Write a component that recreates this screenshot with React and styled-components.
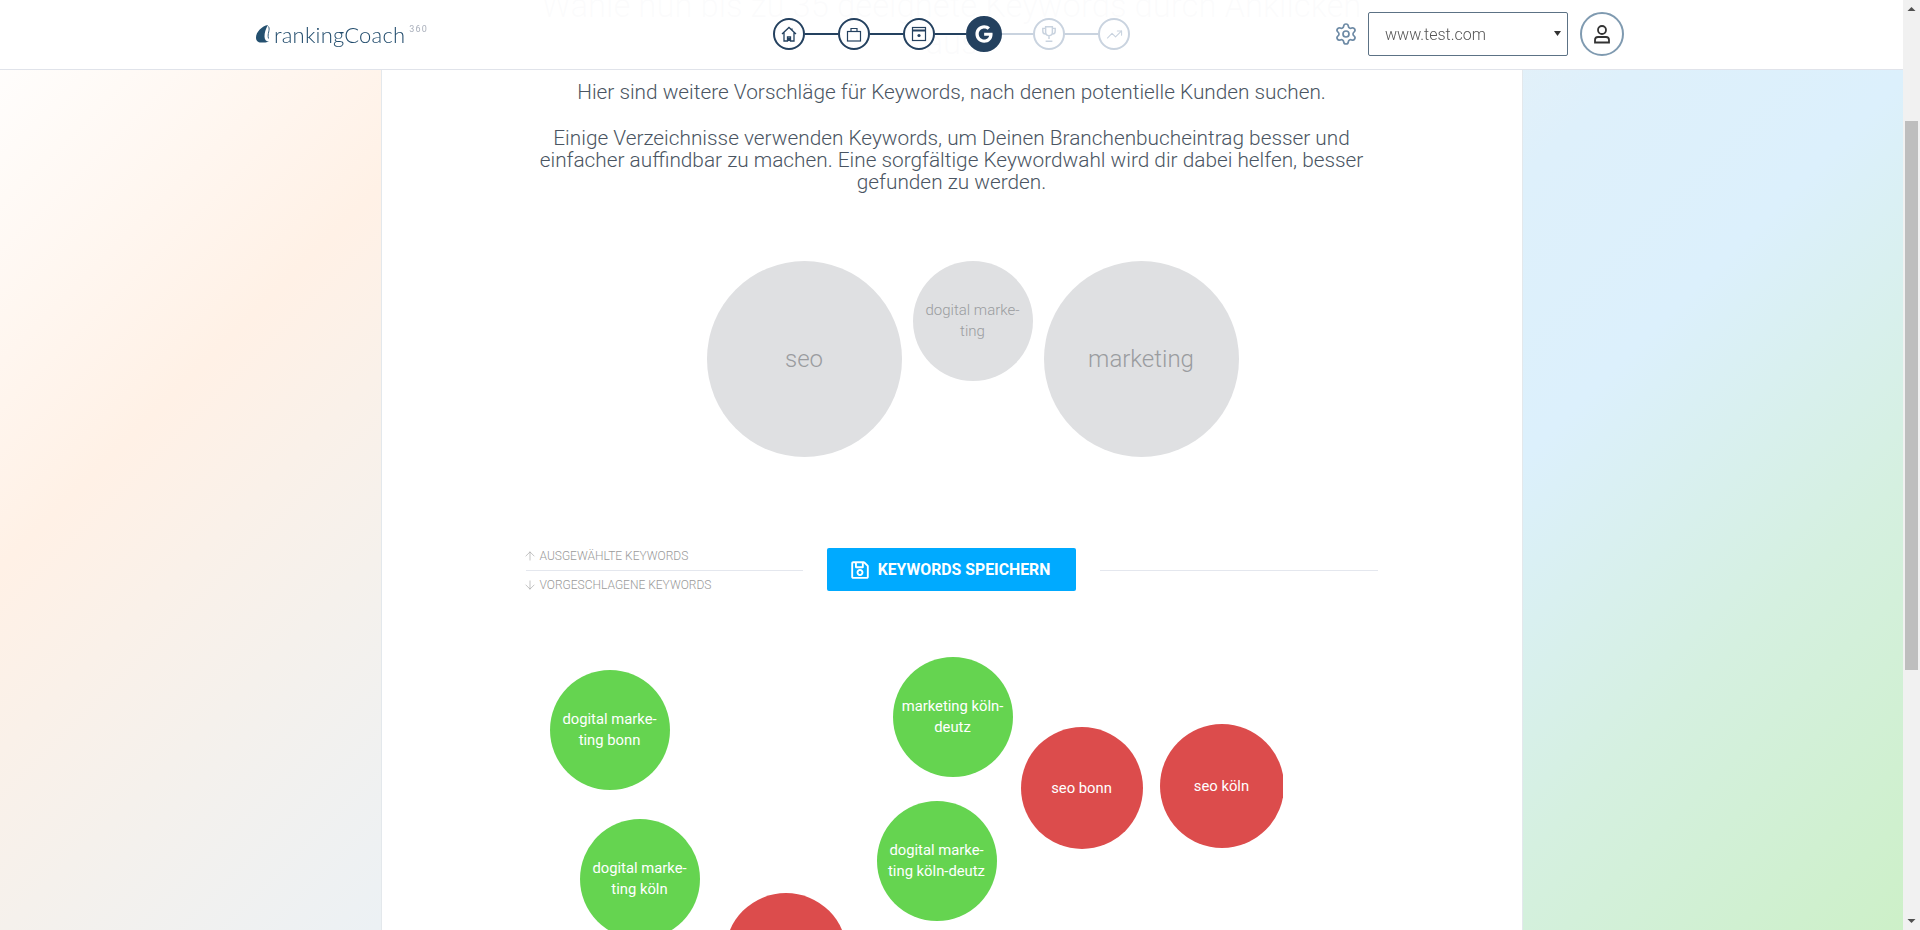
import React, { useLayoutEffect } from "react";
import styled, { createGlobalStyle } from "styled-components";
import { ArrowUp, ArrowDown, Settings, TrendingUp } from "lucide-react";
import { FaGoogle, FaRegSave } from "react-icons/fa";

const selectArrow =
  "url(\"data:image/svg+xml,%3Csvg xmlns='http://www.w3.org/2000/svg' width='7' height='5'%3E%3Cpath d='M0 0h7L3.5 5z' fill='%23333'/%3E%3C/svg%3E\")";

const GlobalStyle = createGlobalStyle`
  body {
    margin: 0;
    font-family: Roboto, "Liberation Sans", sans-serif;
    background: #fff;
  }
`;

const Page = styled.div`
  width: 1903px;
  height: 1518px;
  box-sizing: border-box;
  padding-top: 70px;
  background-color: #dbeffc;
  background-image: linear-gradient(
    135deg,
    #ffffff 0%,
    #fff1e6 20%,
    #f5f1ec 33%,
    #ecf1f4 46%,
    #def0fb 60%,
    #dcf0fc 70%,
    #d5f0e0 84%,
    #cdf0c8 100%
  );
  background-size: 1903px 930px;
  background-position: 0 176px;
  background-repeat: no-repeat;
`;

const Header = styled.header`
  position: fixed;
  top: 0;
  left: 0;
  width: 1903px;
  height: 70px;
  box-sizing: border-box;
  z-index: 10;
  display: grid;
  grid-template-columns: 517px auto 1fr;
  align-items: center;
  padding: 0 279px 0 256px;
  background: rgba(255, 255, 255, 0.98);
  border-bottom: 1px solid #e0e3ea;
`;

const Logo = styled.div`
  display: flex;
  align-items: center;
  color: #1f4a6b;
  margin-top: -1px;
`;

const LogoName = styled.span`
  font-family: Lato, sans-serif;
  font-size: 22px;
  font-weight: 300;
  margin-left: 4px;
  letter-spacing: 0.2px;
`;

const LogoSuffix = styled.sup`
  font-family: Roboto, sans-serif;
  font-size: 9px;
  letter-spacing: 1.2px;
  color: #a9afbb;
  margin: -9px 0 0 4px;
  line-height: 1;
`;

const Stepper = styled.nav`
  display: flex;
  align-items: center;
  margin-top: -1px;
`;

const Step = styled.div`
  width: ${(p) => (p.$active ? 36 : 32)}px;
  height: ${(p) => (p.$active ? 36 : 32)}px;
  box-sizing: border-box;
  display: flex;
  align-items: center;
  justify-content: center;
  border-radius: 50%;
  border: 2px solid ${(p) => (p.$muted ? "#c9d3df" : "#24415f")};
  background: ${(p) => (p.$active ? "#24415f" : "transparent")};
  color: ${(p) => (p.$active ? "#fff" : p.$muted ? "#c9d3df" : "#24415f")};
`;

const Connector = styled.span`
  width: ${(p) => p.$width}px;
  height: 2px;
  background: ${(p) => (p.$muted ? "#c9d3df" : "#24415f")};
`;

const Account = styled.div`
  display: flex;
  align-items: center;
  justify-content: flex-end;
  color: #6d8aa5;
  margin-top: -1px;
`;

const SiteSelect = styled.select`
  appearance: none;
  width: 200px;
  height: 44px;
  margin: 0 12px 0 10px;
  padding: 0 0 0 16px;
  box-sizing: border-box;
  font-family: Roboto, sans-serif;
  font-weight: 300;
  font-size: 16px;
  color: #555;
  background: #fff ${selectArrow} no-repeat 185px 18px;
  border: 1px solid #5c7285;
  border-radius: 2px;
`;

const UserButton = styled.div`
  width: 44px;
  height: 44px;
  box-sizing: border-box;
  display: flex;
  align-items: center;
  justify-content: center;
  border-radius: 50%;
  border: 2px solid #7f9ab0;
  color: #333;
`;

const Panel = styled.main`
  width: 1142px;
  height: 1448px;
  margin: 0 auto;
  box-sizing: border-box;
  padding: 94px 144px 0;
  background: #fff;
  border: solid #e3e8ec;
  border-width: 0 1px;
  color: #4a5562;
  font-weight: 300;
  text-align: center;
`;

const Title = styled.h1`
  margin: 0;
  font-size: 32.8px;
  line-height: 37px;
  font-weight: 300;
`;

const Intro = styled.p`
  margin: ${(p) => p.$top}px 0 0;
  font-size: 20.8px;
  line-height: 22px;
`;

const BubbleField = styled.div`
  position: relative;
  overflow: hidden;
  height: ${(p) => p.$height}px;
  margin-top: ${(p) => p.$top}px;
  width: ${(p) => p.$width}px;
`;

const Bubble = styled.div`
  position: absolute;
  left: ${(p) => p.$x}px;
  top: ${(p) => p.$y}px;
  width: ${(p) => p.$w}px;
  height: ${(p) => p.$h || p.$w}px;
  display: flex;
  align-items: center;
  justify-content: center;
  border-radius: 50%;
  white-space: pre-line;
  font-size: ${(p) => (p.$w > 150 ? 24 : p.$tone === "grey" ? 15 : 14.8)}px;
  line-height: 21px;
  font-weight: ${(p) => (p.$tone === "grey" ? 300 : 400)};
  color: ${(p) => (p.$tone === "grey" ? "#9a9c9f" : "#fff")};
  background: ${(p) =>
    p.$tone === "grey" ? "#dfe0e2" : p.$tone === "red" ? "#dc4c4c" : "#65d450"};
`;

const LegendRow = styled.div`
  display: grid;
  grid-template-columns: 1fr 249px 1fr;
  grid-template-rows: 43px;
  column-gap: 24px;
  align-items: center;
  margin-top: 91px;
`;

const Legend = styled.div`
  display: flex;
  flex-direction: column;
  margin-top: 3px;
`;

const LegendLabel = styled.div`
  display: flex;
  align-items: center;
  gap: 3px;
  height: 28px;
  font-size: 12px;
  font-weight: 300;
  color: #9a9a9a;
  text-transform: uppercase;
  border-bottom: 1px solid ${(p) => (p.$ruled ? "#e4e7ee" : "transparent")};

  svg {
    margin-left: -3px;
  }
`;

const SaveButton = styled.button`
  height: 43px;
  display: flex;
  align-items: center;
  justify-content: center;
  gap: 8px;
  padding: 0 3px 0 0;
  border: 0;
  border-radius: 2px;
  background: #00aaff;
  color: #fff;
  font-family: Roboto, sans-serif;
  font-size: 15.8px;
  font-weight: 700;
  text-transform: uppercase;
`;

const Rule = styled.hr`
  width: 100%;
  margin: 1px 0 0;
  border: 0;
  border-top: 1px solid #e4e7ee;
`;

// the browser's own scrollbar is hidden in this window, so it is drawn over the page edge
const ScrollBar = styled.div`
  position: fixed;
  top: 0;
  right: 0;
  width: 17px;
  height: 930px;
  z-index: 20;
  display: flex;
  flex-direction: column;
  background: #f1f1f1;
  color: #505050;
`;

const ScrollArrow = styled.svg`
  flex: none;
  width: 17px;
  height: 17px;
  margin-top: ${(p) => (p.$end ? "auto" : "0")};
`;

const ScrollThumb = styled.div`
  height: 549px;
  margin: 104px 2px 0;
  background: #bebebe;
`;

const HomeIcon = () => (
  <svg width="16" height="16" viewBox="0 0 16 16" fill="none" stroke="currentColor" strokeWidth="1.3">
    <path d="M1 8 8 1.500 15 8M3 6.500V15h3.500v-4h3v4H13V6.500M11 2.500v2.500" />
    <rect x="7" y="12" width="2" height="3" fill="currentColor" stroke="none" />
  </svg>
);

const CaseIcon = () => (
  <svg width="16" height="16" viewBox="0 0 16 16" fill="none" stroke="currentColor" strokeWidth="1.2">
    <rect x="1.500" y="5.500" width="13" height="9.500" />
    <path d="M5 5.500V2.500h6v3" />
  </svg>
);

const WindowIcon = () => (
  <svg width="16" height="16" viewBox="0 0 16 16" fill="none" stroke="currentColor" strokeWidth="1.2">
    <rect x="1.500" y="1.500" width="13" height="13" />
    <path d="M1.500 4.500h13" strokeWidth="2" />
    <circle cx="8" cy="9.500" r="1.600" fill="currentColor" stroke="none" />
  </svg>
);

const TrophyIcon = () => (
  <svg width="18" height="18" viewBox="0 0 16 16" fill="none" stroke="currentColor" strokeWidth="1.3">
    <path d="M5 1.500h6v5a3 3 0 0 1-6 0zM5 3H2.500v2.500A2.500 2.500 0 0 0 5 8M11 3h2.500v2.500A2.500 2.500 0 0 1 11 8M8 9.500v3M5 14.500h6" />
  </svg>
);

const UserIcon = () => (
  <svg width="20" height="20" viewBox="0 0 20 20" fill="none" stroke="currentColor" strokeWidth="1.8">
    <circle cx="10" cy="6" r="4" />
    <path d="M3 18.500V16a3 3 0 0 1 3-3h8a3 3 0 0 1 3 3v2.500z" />
  </svg>
);

const LogoMark = () => (
  <svg width="14" height="18" viewBox="0 0 14 18">
    <path
      d="M12 0C6 1 0 7 0 12.500 0 16 2 17.500 5 17.500c3 0 6 0 8-1C10 16.500 8.500 14.500 8.500 11.500 8.500 8 9.500 4 12 0z"
      fill="#24506f"
    />
    <path d="M12.500 1.500C14.500 5 11 8.500 12.500 13.500" fill="none" stroke="#24506f" strokeWidth="0.9" />
  </svg>
);

const selected = [
  { x: 181, y: 0, w: 195, h: 196, tone: "grey", label: "seo" },
  { x: 387, y: 0, w: 120, tone: "grey", label: "dogital marke-\nting" },
  { x: 518, y: 0, w: 195, h: 196, tone: "grey", label: "marketing" },
];

const suggested = [
  { x: 24, y: 29, w: 120, tone: "green", label: "dogital marke-\nting bonn" },
  { x: 367, y: 16, w: 120, tone: "green", label: "marketing köln-\ndeutz" },
  { x: 495, y: 86, w: 122, tone: "red", label: "seo bonn" },
  { x: 634, y: 83, w: 124, tone: "red", label: "seo köln" },
  { x: 54, y: 178, w: 120, tone: "green", label: "dogital marke-\nting köln" },
  { x: 351, y: 160, w: 120, tone: "green", label: "dogital marke-\nting köln-deutz" },
  { x: 199, y: 252, w: 122, tone: "red", label: "seo köln-deutz" },
];

const renderBubble = (b) => (
  <Bubble key={b.label} $x={b.x} $y={b.y} $w={b.w} $h={b.h} $tone={b.tone}>
    {b.label}
  </Bubble>
);

export default function App() {
  // the reference shows the page scrolled a bit below its top
  useLayoutEffect(() => {
    window.scrollTo(0, 176);
  }, []);

  return (
    <Page>
      <GlobalStyle />
      <Header>
        <Logo>
          <LogoMark />
          <LogoName>rankingCoach</LogoName>
          <LogoSuffix>360</LogoSuffix>
        </Logo>
        <Stepper>
          <Step><HomeIcon /></Step>
          <Connector $width={33} />
          <Step><CaseIcon /></Step>
          <Connector $width={33} />
          <Step><WindowIcon /></Step>
          <Connector $width={31} />
          <Step $active><FaGoogle size={18} /></Step>
          <Connector $width={31} $muted />
          <Step $muted><TrophyIcon /></Step>
          <Connector $width={33} $muted />
          <Step $muted><TrendingUp size={17} strokeWidth={1.5} /></Step>
        </Stepper>
        <Account>
          <Settings size={24} strokeWidth={1.7} />
          <SiteSelect defaultValue="www.test.com">
            <option>www.test.com</option>
          </SiteSelect>
          <UserButton><UserIcon /></UserButton>
        </Account>
      </Header>
      <Panel>
        <Title>Wähle nun bis zu 35 geeignete Keywords durch Anklicken aus</Title>
        <Intro $top={19}>
          Hier sind weitere Vorschläge für Keywords, nach denen potentielle Kunden suchen.
        </Intro>
        <Intro $top={24}>
          Einige Verzeichnisse verwenden Keywords, um Deinen Branchenbucheintrag besser und
          einfacher auffindbar zu machen. Eine sorgfältige Keywordwahl wird dir dabei helfen,
          besser gefunden zu werden.
        </Intro>
        <BubbleField $top={68} $height={196} $width={852}>
          {selected.map(renderBubble)}
        </BubbleField>
        <LegendRow>
          <Legend>
            <LegendLabel $ruled>
              <ArrowUp size={14} strokeWidth={1} />
              Ausgewählte Keywords
            </LegendLabel>
            <LegendLabel>
              <ArrowDown size={14} strokeWidth={1} />
              Vorgeschlagene Keywords
            </LegendLabel>
          </Legend>
          <SaveButton>
            <FaRegSave size={20} />
            Keywords speichern
          </SaveButton>
          <Rule />
        </LegendRow>
        <BubbleField $top={50} $height={640} $width={757}>
          {suggested.map(renderBubble)}
        </BubbleField>
      </Panel>
      <ScrollBar>
        <ScrollArrow viewBox="0 0 17 17">
          <path d="M4.500 11 8.500 7 12.500 11z" fill="currentColor" />
        </ScrollArrow>
        <ScrollThumb />
        <ScrollArrow viewBox="0 0 17 17" $end>
          <path d="M4.500 6 8.500 10 12.500 6z" fill="currentColor" />
        </ScrollArrow>
      </ScrollBar>
    </Page>
  );
}
